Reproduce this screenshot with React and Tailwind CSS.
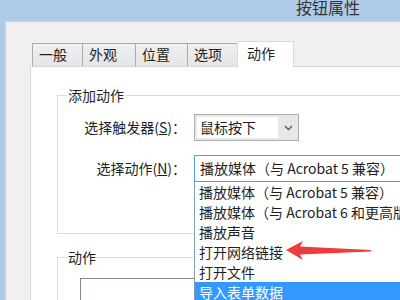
import React from 'react'

const tabs = [
  { label: '一般', w: 'w-[51px]' },
  { label: '外观', w: 'w-[54px]' },
  { label: '位置', w: 'w-[53px]' },
  { label: '选项', w: 'w-[51px]' },
]

const options = [
  '播放媒体（与 Acrobat 5 兼容）',
  '播放媒体（与 Acrobat 6 和更高版本兼容）',
  '播放声音',
  '打开网络链接',
  '打开文件',
  '导入表单数据',
]

function Chevron() {
  return (
    <svg width="9" height="6" viewBox="0 0 9 6" fill="none">
      <path d="M1 1l3.5 3.5L8 1" stroke="#5a5a5a" strokeWidth="1.4" />
    </svg>
  )
}

export default function App() {
  return (
    <div
      className="relative w-[400px] h-[300px] overflow-hidden bg-[#afcbe9] text-[14px] text-[#1e1e1e]"
      style={{ fontFamily: '"Microsoft YaHei", "Noto Sans CJK SC", sans-serif' }}
    >
      {/* title bar */}
      <div className="h-[21px] pl-[296px] text-[16px] leading-[15px] text-[#333]">按钮属性</div>

      {/* client area */}
      <div className="ml-[5px] h-[279px] bg-[#f0f0f0] border-l border-t border-[#c3d3e4] pl-[24px] pt-[19px]">
        {/* tab strip */}
        <div className="ml-[2px] flex items-end h-[25px]">
          {tabs.map((t) => (
            <div
              key={t.label}
              className={`${t.w} h-[23px] pl-[6px] leading-[21px] border border-b-0 border-[#acacac] -ml-px first:ml-0 bg-gradient-to-b from-[#f0f0f0] to-[#e5e5e5]`}
            >
              {t.label}
            </div>
          ))}
          <div className="relative z-10 -mb-px w-[57px] h-[26px] pl-[9px] leading-[22px] border border-b-0 border-[#d9d9d9] -ml-px bg-white">
            动作
          </div>
        </div>

        {/* panel */}
        <div className="w-[420px] h-[260px] bg-white border border-[#d9d9d9] pl-[26px]">
          <fieldset className="mt-[18px] w-[400px] h-[149px] border border-[#dcdcdc] pl-[9px]">
            <legend className="px-[1px] leading-[20px]">添加动作</legend>
            <div className="-ml-[9px] pt-[9px] grid grid-cols-[128px_auto] gap-x-[8px] gap-y-[14px] items-center">
              <div className="text-right">
                选择触发器(<span className="underline">S</span>)：
              </div>
              <div className="w-[105px] h-[27px] border border-[#acacac] bg-[#e8e8e8] flex items-center pl-[2px]">
                <div className="w-[81px] h-[21px] bg-white pl-[3px] leading-[21px]">鼠标按下</div>
                <div className="flex-1 flex justify-center">
                  <Chevron />
                </div>
              </div>
              <div className="text-right">
                选择动作(<span className="underline">N</span>)：
              </div>
              <div className="w-[220px] h-[27px] border border-[#569de5] bg-white pl-[5px] leading-[25px] whitespace-nowrap">
                播放媒体（与 Acrobat 5 兼容）
              </div>
            </div>
          </fieldset>

          <fieldset className="mt-[13px] w-[400px] h-[80px] border border-[#dcdcdc] pl-[9px]">
            <legend className="px-[1px] leading-[20px]">动作</legend>
            <div className="mt-[11px] ml-[13px] w-[300px] h-[60px] border border-[#828790] bg-white" />
          </fieldset>
        </div>
      </div>

      {/* open dropdown list */}
      <div className="absolute left-[194px] top-[182px] w-[230px] border-l border-[#7f9db9] bg-white">
        {options.map((o, i) => (
          <div
            key={o}
            className={`h-[20px] pl-[4px] leading-[20px] whitespace-nowrap ${
              i === options.length - 1 ? 'bg-[#3399ff] text-white' : ''
            }`}
          >
            {o}
          </div>
        ))}
      </div>

      {/* red annotation arrow */}
      <svg className="absolute left-0 top-0" width="400" height="300" viewBox="0 0 400 300">
        <polygon
          points="286,250 303,241 300,246.5 371,250 371,251.5 300,254.5 303,260"
          fill="#ee3b3b"
        />
      </svg>
    </div>
  )
}
